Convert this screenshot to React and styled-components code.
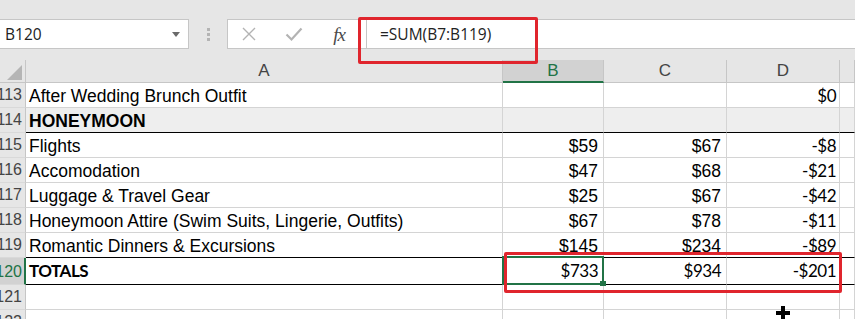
import React from 'react';
import styled, { createGlobalStyle, css } from 'styled-components';

const GREEN = '#217346';
const GRID = '#d4d4d4';
const HEAD_BG = '#e6e6e6';
const HEAD_SEL = '#d2d2d2';
const HEAD_LINE = '#c6c6c6';
const RED = '#e0252d';
const COLS = '26px 477px 101px 123px 113px 1fr';

const GlobalStyle = createGlobalStyle`
  html, body { margin: 0; padding: 0; background: ${HEAD_BG}; }
  body { width: 855px; height: 319px; overflow: hidden; font-family: "Liberation Sans", Arial, sans-serif; }
  * { box-sizing: border-box; }
`;

const Frame = styled.div`
  position: relative;
  width: 855px;
  height: 319px;
  overflow: hidden;
  background: ${HEAD_BG};
  padding-top: 19px;
`;

const FormulaBar = styled.div`
  display: flex;
  height: 30px;
`;

const NameBox = styled.div`
  width: 189px;
  height: 30px;
  background: #fff;
  border: 1px solid ${HEAD_LINE};
  border-left: none;
  display: flex;
  align-items: center;
  justify-content: space-between;
  padding: 0 8px 0 5px;
  font-family: "Open Sans", "Liberation Sans", sans-serif;
  font-size: 15.5px;
  color: #222;
`;

const DropArrow = styled.span`
  width: 0;
  height: 0;
  border-left: 4px solid transparent;
  border-right: 4px solid transparent;
  border-top: 5px solid #6a6a6a;
  margin-top: 1px;
`;

const Grip = styled.div`
  width: 38px;
  display: flex;
  flex-direction: column;
  align-items: center;
  justify-content: center;
  gap: 2px;
`;

const GripDot = styled.span`
  width: 3px;
  height: 3px;
  background: #b4b4b4;
`;

const FxBox = styled.div`
  width: 140px;
  height: 30px;
  background: #fff;
  border: 1px solid ${HEAD_LINE};
  display: flex;
  align-items: center;
`;

const FxButton = styled.div`
  width: ${p => p.$w}px;
  display: flex;
  justify-content: center;
  align-items: center;
  color: ${p => p.$dark ? '#444' : '#b3b3b3'};
`;

const FxText = styled.span`
  font-family: "Liberation Serif", "DejaVu Serif", serif;
  font-style: italic;
  font-size: 19px;
  color: #4a4a4a;
  letter-spacing: -1px;
  line-height: 1;
`;

const FormulaInput = styled.div`
  flex: 1;
  height: 30px;
  background: #fff;
  border-top: 1px solid ${HEAD_LINE};
  border-bottom: 1px solid ${HEAD_LINE};
  display: flex;
  align-items: center;
  padding-left: 13px;
  font-family: "Open Sans", "Liberation Sans", sans-serif;
  font-size: 15.5px;
  color: #222;
`;

const Spacer = styled.div`
  height: 11px;
`;

const Sheet = styled.div`
  display: flex;
  flex-direction: column;
`;

const Row = styled.div`
  display: grid;
  grid-template-columns: ${COLS};
  height: ${p => p.$h}px;
`;

const Corner = styled.div`
  background: ${HEAD_BG};
  border-right: 1px solid ${HEAD_LINE};
  border-bottom: 1px solid ${HEAD_LINE};
  display: flex;
  align-items: flex-end;
  justify-content: flex-end;
  padding: 0 3px 2px 0;
`;

const ColHead = styled.div`
  background: ${p => p.$sel ? HEAD_SEL : HEAD_BG};
  border-right: 1px solid ${HEAD_LINE};
  border-bottom: ${p => p.$sel ? `2px solid ${GREEN}` : `1px solid ${HEAD_LINE}`};
  display: flex;
  align-items: center;
  justify-content: center;
  font-size: 17px;
  color: ${p => p.$sel ? GREEN : '#444'};
  padding-top: ${p => p.$sel ? '1px' : '0'};
`;

const RowHead = styled.div`
  background: ${p => p.$sel ? HEAD_SEL : HEAD_BG};
  border-right: ${p => p.$sel ? `2px solid ${GREEN}` : `1px solid ${HEAD_LINE}`};
  border-bottom: 1px solid #d9d9d9;
  display: flex;
  align-items: flex-end;
  justify-content: flex-end;
  overflow: hidden;
  white-space: nowrap;
  padding: 0 ${p => p.$sel ? '2px' : '3px'} 2px 0;
  font-size: 16px;
  line-height: 20px;
  color: ${p => p.$sel ? GREEN : '#444'};
`;

const calibri = css`
  font-family: Lato, "Open Sans", sans-serif;
  font-size: 17px;
  letter-spacing: -0.5px;
`;

const Cell = styled.div`
  position: relative;
  background: ${p => p.$fill || '#fff'};
  border-right: 1px solid ${GRID};
  border-bottom: 1px solid ${p => p.$line || GRID};
  display: flex;
  align-items: flex-end;
  justify-content: ${p => p.$right ? 'flex-end' : 'flex-start'};
  padding: 0 ${p => p.$pr ?? 4}px ${p => p.$pb ?? 1}px 3px;
  white-space: nowrap;
  overflow: visible;
  font-family: "Liberation Sans", Arial, sans-serif;
  font-size: 17.5px;
  line-height: 20px;
  font-weight: ${p => p.$bold ? 700 : 400};
  color: #000;
  ${p => p.$cal && calibri}
  ${p => p.$selected && css`
    &::after {
      content: '';
      position: absolute;
      left: -1px;
      top: -2px;
      right: -1px;
      bottom: -1px;
      border: 2px solid ${GREEN};
      pointer-events: none;
    }
    &::before {
      content: '';
      position: absolute;
      right: -3px;
      bottom: -2px;
      width: 6px;
      height: 5px;
      background: ${GREEN};
      z-index: 1;
    }
  `}
`;

const RedBox = styled.div`
  position: absolute;
  left: ${p => p.$x}px;
  top: ${p => p.$y}px;
  width: ${p => p.$w}px;
  height: ${p => p.$h}px;
  border: 3px solid ${RED};
  border-radius: 2px;
  pointer-events: none;
`;

const Cursor = styled.svg`
  position: absolute;
  left: 776px;
  top: 306px;
`;

const rows = [
  { n: 113, a: 'After Wedding Brunch Outfit', b: '', c: '', d: '$0', dCal: true },
  { n: 114, a: 'HONEYMOON', bold: true, fill: '#eeeeee', line: '#000' },
  { n: 115, a: 'Flights', b: '$59', c: '$67', d: '-$8', dCal: true },
  { n: 116, a: 'Accomodation', b: '$47', c: '$68', d: '-$21', dCal: true },
  { n: 117, a: 'Luggage & Travel Gear', b: '$25', c: '$67', d: '-$42', dCal: true },
  { n: 118, a: 'Honeymoon Attire (Swim Suits, Lingerie, Outfits)', b: '$67', c: '$78', d: '-$11', dCal: true },
  { n: 119, a: 'Romantic Dinners & Excursions', b: '$145', c: '$234', d: '-$89', dCal: true, line: '#000' },
  { n: 120, a: 'TOTALS', b: '$733', c: '$934', d: '-$201', totals: true, line: '#000', h: 27 },
  { n: 121 },
  { n: 122 },
];

function XIcon() {
  return (
    <svg width="16" height="16" viewBox="0 0 16 16">
      <path d="M2 2 L14 14 M14 2 L2 14" stroke="currentColor" strokeWidth="1.4" fill="none" />
    </svg>
  );
}

function CheckIcon() {
  return (
    <svg width="18" height="16" viewBox="0 0 18 16">
      <path d="M1.5 8.5 L6.5 13.5 L16.5 2.5" stroke="currentColor" strokeWidth="2.2" fill="none" />
    </svg>
  );
}

function CornerTriangle() {
  return (
    <svg width="15" height="15" viewBox="0 0 15 15">
      <path d="M15 0 L15 15 L0 15 Z" fill="#b5b5b5" />
    </svg>
  );
}

export default function App() {
  return (
    <>
      <GlobalStyle />
      <Frame>
        <FormulaBar>
          <NameBox>
            <span>B120</span>
            <DropArrow />
          </NameBox>
          <Grip>
            <GripDot />
            <GripDot />
            <GripDot />
          </Grip>
          <FxBox>
            <FxButton $w={42}><XIcon /></FxButton>
            <FxButton $w={48}><CheckIcon /></FxButton>
            <FxButton $w={42} $dark><FxText>fx</FxText></FxButton>
          </FxBox>
          <FormulaInput>=SUM(B7:B119)</FormulaInput>
        </FormulaBar>
        <Spacer />
        <Sheet>
          <Row $h={23}>
            <Corner><CornerTriangle /></Corner>
            <ColHead>A</ColHead>
            <ColHead $sel>B</ColHead>
            <ColHead>C</ColHead>
            <ColHead>D</ColHead>
            <ColHead />
          </Row>
          {rows.map(r => {
            const h = r.h || 25;
            const t = r.totals;
            return (
              <Row key={r.n} $h={h}>
                <RowHead $sel={t}>{r.n}</RowHead>
                <Cell $fill={r.fill} $line={r.line} $bold={r.bold || t} $cal={t} $pb={t ? 3 : 1}>{r.a}</Cell>
                <Cell $fill={r.fill} $line={r.line} $right $pr={5} $cal={t} $pb={t ? 3 : 1} $selected={t}>{r.b}</Cell>
                <Cell $fill={r.fill} $line={r.line} $right $pr={5} $cal={t} $pb={t ? 3 : 1}>{r.c}</Cell>
                <Cell $fill={r.fill} $line={r.line} $right $pr={3} $cal={t || r.dCal} $pb={t ? 3 : 1}>{r.d}</Cell>
                <Cell $fill={r.fill} $line={r.line} />
              </Row>
            );
          })}
        </Sheet>
        <RedBox $x={358} $y={17} $w={180} $h={47} />
        <RedBox $x={504} $y={252} $w={338} $h={41} />
        <Cursor width="14" height="16" viewBox="0 0 14 16">
          <path d="M5 0 H9 V5 H14 V9 H9 V16 H5 V9 H0 V5 H5 Z" fill="#000" />
        </Cursor>
      </Frame>
    </>
  );
}
